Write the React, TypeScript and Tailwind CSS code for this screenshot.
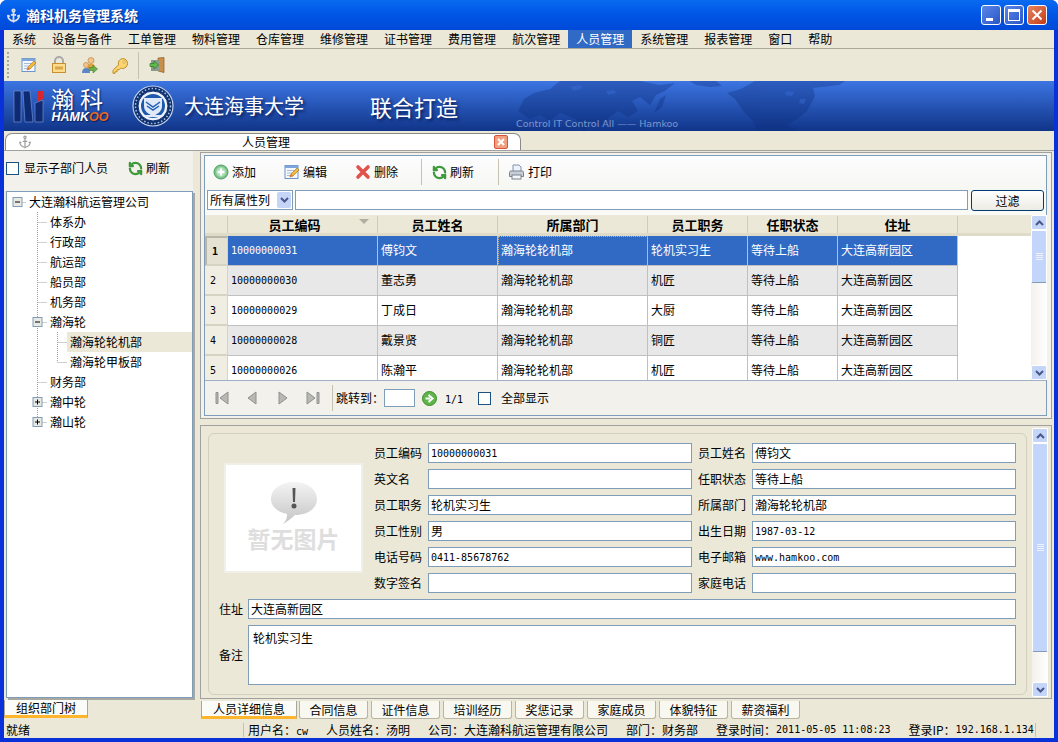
import { Anchor, RefreshCcw } from "lucide-react";

const MENUS = ["系统", "设备与备件", "工单管理", "物料管理", "仓库管理", "维修管理", "证书管理", "费用管理", "航次管理", "人员管理", "系统管理", "报表管理", "窗口", "帮助"];
const COLS = [150, 120, 150, 100, 90, 120];
const HEADS = ["员工编码", "员工姓名", "所属部门", "员工职务", "任职状态", "住址"];
const ROWS = [
  ["10000000031", "傅钧文", "瀚海轮轮机部", "轮机实习生"],
  ["10000000030", "董志勇", "瀚海轮轮机部", "机匠"],
  ["10000000029", "丁成日", "瀚海轮轮机部", "大厨"],
  ["10000000028", "戴景贤", "瀚海轮轮机部", "铜匠"],
  ["10000000026", "陈瀚平", "瀚海轮轮机部", "机匠"],
];
const TABS = ["合同信息", "证件信息", "培训经历", "奖惩记录", "家庭成员", "体貌特征", "薪资福利"];

// 数字用等宽字体，宽度接近原图的半角字
const Num = ({ children, className = "" }: { children: React.ReactNode; className?: string }) => (
  <span className={`font-['DejaVu_Sans_Mono',monospace] text-[10px] ${className}`}>{children}</span>
);

const AddIcon = () => (
  <svg width="16" height="16" viewBox="0 0 16 16">
    <circle cx="8" cy="8" r="7" fill="#7cc48a" stroke="#4f9e68" />
    <circle cx="8" cy="8" r="5" fill="#a5dcae" />
    <path d="M8 4.500v7M4.500 8h7" stroke="#fff" strokeWidth="2.400" />
  </svg>
);

const EditIcon = () => (
  <svg width="16" height="16" viewBox="0 0 16 16">
    <rect x="1" y="1.500" width="13" height="13" fill="#f4f8fe" stroke="#6e94c9" />
    <path d="M1 1.500h13v2.500H1z" fill="#7ea6dc" />
    <path d="M3 6.500h8M3 9h5M3 11.500h3" stroke="#a9bcd6" />
    <path d="M6 13l1-3 6-6 2 2-6 6z" fill="#f0b93f" stroke="#b57a1c" strokeWidth=".7" />
    <path d="M6 13l1-3 2 2z" fill="#e2753a" />
  </svg>
);

const DeleteIcon = () => (
  <svg width="16" height="16" viewBox="0 0 16 16">
    <path d="M3 3l10 10M13 3L3 13" stroke="#e0524a" strokeWidth="3.600" strokeLinecap="round" />
  </svg>
);

const PrintIcon = () => (
  <svg width="17" height="16" viewBox="0 0 17 16">
    <path d="M5 1h6l2 2v5H5z" fill="#eef3fb" stroke="#7f93b2" />
    <path d="M1.500 8.500c0-1 .5-1.500 1.500-1.500h11c1 0 1.500.5 1.500 1.500v4h-14z" fill="#c8cdd6" stroke="#7b8290" />
    <rect x="4" y="11" width="9" height="4" fill="#f5f6f8" stroke="#7b8290" />
  </svg>
);

const Refresh = () => <RefreshCcw size={15} strokeWidth={3.6} color="#3f9a3c" />;

const LockIcon = () => (
  <svg width="16" height="18" viewBox="0 0 16 18">
    <path d="M4 8V5a4 4 0 0 1 8 0v3" fill="none" stroke="#a9a9a9" strokeWidth="2" />
    <rect x="1.500" y="7.500" width="13" height="9" fill="#fbdc8c" stroke="#c98f2c" />
    <rect x="4" y="10.500" width="8" height="3" fill="#d9a545" />
  </svg>
);

const UsersIcon = () => (
  <svg width="17" height="17" viewBox="0 0 17 17">
    <circle cx="10" cy="3.500" r="3" fill="#f3c48c" stroke="#b87e3c" strokeWidth=".6" />
    <path d="M6 12c0-4 1.500-5.500 4-5.500s4 1.500 4 5z" fill="#e2a23e" />
    <circle cx="5" cy="8" r="2.500" fill="#f3c48c" stroke="#b87e3c" strokeWidth=".6" />
    <path d="M1 16c0-3.500 1.500-5 4-5s4 1.500 4 5z" fill="#5c86c8" />
    <path d="M8 10.500h4V8l4.500 4-4.500 4v-2.500H8z" fill="#6cb04a" stroke="#3d7d2b" strokeWidth=".6" />
  </svg>
);

const KeyIcon = () => (
  <svg width="17" height="17" viewBox="0 0 17 17">
    <path d="M10.500 1.500a5 5 0 0 1 0 10c-.7 0-1.300-.1-1.800-.4L7 12.800H5v2H3v1.500H1v-3l5.500-5.500A5 5 0 0 1 10.500 1.500z" fill="#fbd670" stroke="#c08a25" />
    <circle cx="12" cy="5" r="1.300" fill="#fff6d0" stroke="#c08a25" strokeWidth=".6" />
  </svg>
);

const DoorIcon = () => (
  <svg width="16" height="16" viewBox="0 0 16 16">
    <path d="M9 1l6-.5V15.500L9 14z" fill="#c9904a" stroke="#8c5d25" strokeWidth=".7" />
    <rect x="2" y="3" width="8" height="11" fill="#8b9a8e" />
    <path d="M1 6.500h4V4l4.500 4L5 12V9.500H1z" fill="#64b84c" stroke="#2f7a22" strokeWidth=".7" />
  </svg>
);

const Tri = ({ d }: { d: string }) => (
  <svg width="16" height="16" viewBox="0 0 16 16">
    <path d={d} fill="#b9b9b3" stroke="#8f9090" />
  </svg>
);

const Expander = ({ open }: { open: boolean }) => (
  <g>
    <rect x="0.500" y="0.500" width="9" height="9" fill="#e9e9e2" stroke="#7f9db9" />
    <path d={open ? "M2.500 5h5" : "M2.500 5h5M5 2.500v5"} stroke="#000" />
  </g>
);

type TreeNode = { label: string; depth: number; box?: "open" | "closed"; last?: boolean; selected?: boolean };

const TREE: TreeNode[] = [
  { label: "大连瀚科航运管理公司", depth: 0, box: "open" },
  { label: "体系办", depth: 1 },
  { label: "行政部", depth: 1 },
  { label: "航运部", depth: 1 },
  { label: "船员部", depth: 1 },
  { label: "机务部", depth: 1 },
  { label: "瀚海轮", depth: 1, box: "open" },
  { label: "瀚海轮轮机部", depth: 2, selected: true },
  { label: "瀚海轮甲板部", depth: 2, last: true },
  { label: "财务部", depth: 1 },
  { label: "瀚中轮", depth: 1, box: "closed" },
  { label: "瀚山轮", depth: 1, box: "closed", last: true },
];

const DOT = { stroke: "#a0a0a0", strokeDasharray: "1 1", fill: "none" };

const TreeRow = ({ node }: { node: TreeNode }) => {
  const w = [19, 40, 60][node.depth];
  const x = [10.5, 30.5, 50.5][node.depth];
  return (
    <div className="flex h-5 items-center">
      <svg width={w} height="20" className="shrink-0">
        {node.depth >= 1 && <path d={`M30.500 0V${node.depth === 1 && node.last ? 10 : 20}`} {...DOT} />}
        {node.depth === 2 && <path d={`M50.500 0V${node.last ? 10 : 20}`} {...DOT} />}
        <path d={`M${x} 10.500H${w}`} {...DOT} />
        {node.box && (
          <g transform={`translate(${x - 5},5)`}>
            <Expander open={node.box === "open"} />
          </g>
        )}
      </svg>
      <span className={`h-5 flex-1 pl-[3px] leading-[19px] ${node.selected ? "bg-[#ebe8d8]" : ""}`}>{node.label}</span>
    </div>
  );
};

const Scrollbar = ({ thumbH, w = "w-4" }: { thumbH: number; w?: string }) => {
  const Btn = ({ d }: { d: string }) => (
    <div className="flex h-[15px] shrink-0 items-center justify-center rounded-[2px] border border-white bg-[#c4d5f8]">
      <svg width="9" height="6" viewBox="0 0 9 6">
        <path d={d} fill="none" stroke="#47588c" strokeWidth="2" />
      </svg>
    </div>
  );
  return (
    <div className={`flex ${w} shrink-0 flex-col bg-gradient-to-r from-[#f3f1ec] to-white`}>
      <Btn d="M1 5l3.500-3.500L8 5" />
      <div className="flex-1 overflow-hidden">
        <div className="flex flex-col items-center justify-center gap-[1px] rounded-[2px] border border-[#fff] border-b-[#7f9db9] bg-[#c4d5fb]" style={{ height: thumbH }}>
          <div className="h-px w-[7px] bg-[#eef3fe]" />
          <div className="h-px w-[7px] bg-[#eef3fe]" />
          <div className="h-px w-[7px] bg-[#eef3fe]" />
          <div className="h-px w-[7px] bg-[#eef3fe]" />
        </div>
      </div>
      <Btn d="M1 1l3.500 3.500L8 1" />
    </div>
  );
};

const Field = ({ label, value, num }: { label: string; value?: string; num?: boolean }) => (
  <>
    <span className="flex items-center">{label}</span>
    <div className="flex h-5 items-center border border-[#7f9db9] bg-white pl-[2px]">
      {value && (num ? <Num>{value}</Num> : value)}
    </div>
  </>
);

const ToolItem = ({ icon, label, className }: { icon: React.ReactNode; label: string; className: string }) => (
  <div className={`flex items-center gap-[3px] ${className}`}>
    {icon}
    <span>{label}</span>
  </div>
);

const WorldMap = () => (
  <svg width="340" height="50" viewBox="0 0 340 50" className="absolute left-[506px] top-0">
    <g fill="#0c2c78" opacity=".32">
      <path d="M8 30l6-12 10-6 16-4 10-8h80l20 4 15-2-10 8-9 4-6 10-10-8-8 4 6 10-10 6-10-6-8 6-8 8-8-4-10 10-8-12-16-6-10 8-10-6-10 4z" />
      <path d="M150 18l6-4-4 12-8 6z" />
      <path d="M180 0h26l6 5-12 1-14-2z" />
      <path d="M245 0h90l-6 4-26 3 2 8-8 15-10 8-10 6 10 6h-40l-4-10-10-10-8-12-8-6 14-4z" />
    </g>
    <g fill="#3d75e2" opacity=".35">
      <path d="M60 6l10-2 3 3-9 3zM96 10l8-1 2 3-8 2zM276 10l8 1-2 4-7-1zM290 18l6 0-2 5-5-1z" />
    </g>
  </svg>
);

const Seal = () => (
  <svg width="42" height="42" viewBox="0 0 42 42">
    <circle cx="21" cy="21" r="20" fill="#0f3170" stroke="#c6d4ea" strokeWidth="1.200" />
    <circle cx="21" cy="21" r="17.500" fill="none" stroke="#a9c0e2" strokeWidth="1.500" strokeDasharray="1.500 2" />
    <circle cx="21" cy="21" r="15" fill="#eef3fb" stroke="#0f3170" />
    <circle cx="21" cy="21" r="12" fill="#1f59ad" />
    <path d="M12 13h18v8c0 5-4 8-9 10-5-2-9-5-9-10z" fill="#dfe9f7" />
    <path d="M14 17l7 5 7-5M15 21l6 4 6-4" fill="none" stroke="#2160b8" strokeWidth="1.500" />
    <path d="M13 31h16" stroke="#dfe9f7" strokeWidth="2" />
  </svg>
);

export default function App() {
  return (
    <div className="flex h-[742px] w-[1058px] flex-col overflow-hidden rounded-t-[7px] bg-[#0831d9] font-['Noto_Sans_CJK_SC','Liberation_Sans',sans-serif] text-[12px] text-black">
      {/* 标题栏 */}
      <div className="flex h-[30px] shrink-0 items-center bg-gradient-to-b from-[#0a6af0] via-[#0055e5] to-[#0049d8] pl-[6px] pr-[11px]">
        <Anchor size={15} strokeWidth={2.800} color="#d7dfe8" />
        <span className="ml-[5px] text-[14px] font-bold text-white [text-shadow:1px_1px_1px_#0a2a80]">瀚科机务管理系统</span>
        <div className="ml-auto flex gap-[3px]">
          <div className="flex h-[20px] w-[20px] items-end rounded-[3px] border border-white bg-gradient-to-br from-[#5b86ea] to-[#2a56c6] pb-[3px] pl-[4px]">
            <div className="h-[3px] w-[7px] bg-white" />
          </div>
          <div className="h-[20px] w-[20px] rounded-[3px] border border-white bg-gradient-to-br from-[#5b86ea] to-[#2a56c6] p-[3px]">
            <div className="h-full w-full border border-t-[3px] border-white" />
          </div>
          <div className="flex h-[20px] w-[20px] items-center justify-center rounded-[3px] border border-white bg-gradient-to-br from-[#e8835f] to-[#c33a12]">
            <svg width="12" height="12" viewBox="0 0 12 12">
              <path d="M1.500 1.500l9 9M10.500 1.500l-9 9" stroke="#fff" strokeWidth="2" />
            </svg>
          </div>
        </div>
      </div>

      <div className="flex min-h-0 flex-1 flex-col border-x-4 border-x-[#0831d9] bg-[#ebe8d8]">
        {/* 菜单 */}
        <div className="flex h-[19px] shrink-0 border-b border-[#aca899]">
          {MENUS.map((m) => (
            <div key={m} className={`flex h-[18px] items-center px-2 pb-px ${m === "人员管理" ? "bg-[#316ac5] text-white" : ""}`}>
              {m}
            </div>
          ))}
        </div>

        {/* 工具栏 */}
        <div className="flex h-[32px] shrink-0 items-center pl-[3px]">
          <div className="mr-[12px] h-[26px] w-[2px] border-l-2 border-dotted border-[#a8a89a]" />
          <div className="flex items-center gap-[14px]">
            <EditIcon />
            <LockIcon />
            <UsersIcon />
            <KeyIcon />
          </div>
          <div className="ml-[9px] mr-[10px] h-[27px] w-px bg-[#c5c2b0]" />
          <DoorIcon />
        </div>

        {/* 横幅 */}
        <div className="relative flex h-[50px] shrink-0 items-center bg-gradient-to-b from-[#3d75e2] to-[#103589] pl-[9px]">
          <WorldMap />
          <svg width="31" height="33" viewBox="0 0 31 33" className="relative shrink-0">
            <path d="M1 1h7v31H1z" fill="#0e2a72" stroke="#7f9fe0" strokeWidth=".6" />
            <path d="M10 1h7l3 31h-8z" fill="#0e2a72" stroke="#7f9fe0" strokeWidth=".6" />
            <path d="M22 13l8-3v22h-8z" fill="#0e2a72" stroke="#7f9fe0" strokeWidth=".6" />
            <path d="M24 1h6v8l-6 3z" fill="#d8262c" />
          </svg>
          <div className="relative ml-[6px] flex w-[60px] shrink-0 flex-col items-center text-white">
            <span className="-mt-[2px] text-[23px] leading-[25px] tracking-[6px] [text-shadow:1px_1px_2px_#0a1f5c]">瀚科</span>
            <span className="font-['Liberation_Sans',sans-serif] text-[12.500px] font-bold italic leading-[13px] [text-shadow:1px_1px_1px_#0a1f5c]">
              HAMK<span className="text-[#e8691f]">OO</span>
            </span>
          </div>
          <div className="relative ml-[22px] flex">
            <Seal />
          </div>
          <span className="relative ml-[10px] text-[20px] text-white [text-shadow:2px_2px_3px_#0a1f5c]">大连海事大学</span>
          <span className="relative ml-[66px] text-[22px] text-white [text-shadow:2px_2px_3px_#0a1f5c]">联合打造</span>
          <span className="absolute left-[512px] top-[36px] font-['DejaVu_Sans',sans-serif] text-[9.500px] text-[#7f97cc]">Control IT Control All —— Hamkoo</span>
        </div>

        {/* 文档标签 */}
        <div className="flex h-[19px] shrink-0 items-end pl-[1px]">
          <div className="flex h-[17px] w-[516px] items-center rounded-t-[7px] border border-b-0 border-[#8a8a84] bg-white pl-[12px] pr-[12px]">
            <Anchor size={14} strokeWidth={2} color="#9a9a9a" />
            <span className="flex-1 pl-[6px] text-center">人员管理</span>
            <div className="flex h-[14px] w-[14px] items-center justify-center rounded-[2px] border border-[#d8533a] bg-[#f0a080]">
              <svg width="8" height="8" viewBox="0 0 8 8">
                <path d="M1 1l6 6M7 1L1 7" stroke="#fff" strokeWidth="2" />
              </svg>
            </div>
          </div>
        </div>

        {/* 主体 */}
        <div className="flex min-h-0 flex-1 gap-[7px] border-t border-[#a0a0a0]">
          {/* 左侧 */}
          <div className="flex w-[189px] shrink-0 flex-col">
            <div className="flex h-[40px] shrink-0 items-center bg-[#f3f1ec] pb-[6px] pl-[2px]">
              <div className="h-[13px] w-[13px] border border-[#1c5180] bg-white" />
              <span className="ml-[5px]">显示子部门人员</span>
              <span className="ml-[20px]">
                <Refresh />
              </span>
              <span className="ml-[3px]">刷新</span>
            </div>
            <div className="ml-[2px] h-[507px] shrink-0 border border-[#7f9db9] bg-white shadow-[2px_2px_0_#a8a8a0]">
              {TREE.map((n) => (
                <TreeRow key={n.label} node={n} />
              ))}
            </div>
            <div className="mt-[2px] flex h-[18px] w-[84px] items-center justify-center border-x border-[#a8a89a] border-b-[3px] border-b-[#ffb52c] bg-[#fbfbf7]">
              组织部门树
            </div>
          </div>

          {/* 右侧 */}
          <div className="flex w-[854px] shrink-0 flex-col pt-[1px]">
            <div className="h-[267px] w-[852px] shrink-0 border border-[#a0a0a0] bg-[#f3f1ec] pb-[2px] pl-[3px] pr-[4px] pt-[2px]">
              <div className="flex h-full flex-col border border-[#7f9db9] bg-[#f3f1ec]">
                <div className="flex h-[34px] shrink-0 items-center bg-gradient-to-b from-[#fdfdff] to-[#f6f6f2] pb-[2px] pl-[8px]">
                  <ToolItem icon={<AddIcon />} label="添加" className="w-[71px]" />
                  <ToolItem icon={<EditIcon />} label="编辑" className="w-[71px]" />
                  <ToolItem icon={<DeleteIcon />} label="删除" className="w-[66px]" />
                  <div className="mr-[10px] h-[26px] w-px bg-[#c5c2b0]" />
                  <ToolItem icon={<Refresh />} label="刷新" className="w-[66px]" />
                  <div className="mr-[9px] h-[26px] w-px bg-[#c5c2b0]" />
                  <ToolItem icon={<PrintIcon />} label="打印" className="" />
                </div>
                <div className="flex h-[25px] shrink-0 items-start bg-[#f9f9f5] pl-[2px]">
                  <div className="flex h-5 w-[86px] items-center justify-between border border-[#7f9db9] bg-white pl-[2px] pr-[1px]">
                    <span>所有属性列</span>
                    <div className="flex h-4 w-[14px] items-center justify-center rounded-[2px] bg-[#c4d5f8]">
                      <svg width="9" height="6" viewBox="0 0 9 6">
                        <path d="M1 1l3.500 3.500L8 1" fill="none" stroke="#47588c" strokeWidth="2" />
                      </svg>
                    </div>
                  </div>
                  <div className="ml-[2px] h-5 w-[673px] border border-[#7f9db9] bg-white" />
                  <div className="ml-[3px] flex h-[21px] w-[73px] items-center justify-center rounded-[3px] border border-[#003c74] bg-gradient-to-b from-white to-[#ecebe4]">
                    过滤
                  </div>
                </div>
                {/* 表格 */}
                <div className="flex h-[166px] shrink-0 border-b border-[#a0b0c4]">
                  <div className="w-[826px] shrink-0 overflow-hidden bg-white">
                    <div className="flex h-[21px] border-b-[3px] border-[#dedbc8] bg-[#ebe8d8] pt-px text-[13px] font-bold">
                      <div className="w-[23px] shrink-0 border-r border-[#cfccb8]" />
                      {HEADS.map((h, i) => (
                        <div key={h} style={{ width: COLS[i] }} className={`relative flex shrink-0 items-center justify-center border-r border-[#cfccb8] ${i === 0 ? "pr-[16px]" : ""}`}>
                          {h}
                          {i === 0 && (
                            <svg width="10" height="6" viewBox="0 0 10 6" className="absolute right-[8px] top-[3px]">
                              <path d="M0 0h10L5 5z" fill="#b0aea0" />
                            </svg>
                          )}
                        </div>
                      ))}
                    </div>
                    {ROWS.map((r, i) => {
                      const sel = i === 0;
                      const bg = sel ? "bg-[#316ac5] text-white" : i % 2 ? "bg-[#e8e8e8]" : "bg-white";
                      return (
                        <div key={r[0]} className="flex h-[30px]">
                          <div className={`flex w-[23px] shrink-0 items-center border-b-2 border-r border-[#d6d3c2] pl-[5px] ${sel ? "border-l-2 border-t-2 border-l-[#b8b6a8] border-t-[#b8b6a8] bg-[#e4e1d2] pl-[3px] font-bold" : "bg-[#f0eee2]"}`}>
                            <Num>{i + 1}</Num>
                          </div>
                          {[...r, "等待上船", "大连高新园区"].map((c, j) => (
                            <div
                              key={j}
                              style={{ width: COLS[j] }}
                              className={`flex shrink-0 items-center border-b border-r border-[#c0c0c0] pl-[3px] ${j === 0 ? "" : "pb-[2px]"} ${bg} ${sel && j === 2 ? "outline-1 -outline-offset-1 outline-dotted outline-[#c8b080]" : ""}`}
                            >
                              {j === 0 ? <Num>{c}</Num> : c}
                            </div>
                          ))}
                        </div>
                      );
                    })}
                  </div>
                  <Scrollbar thumbH={53} />
                </div>
                {/* 分页 */}
                <div className="flex min-h-0 flex-1 items-center pl-[9px]">
                  <div className="flex w-[118px] items-center justify-between pr-[11px]">
                    <Tri d="M2 2.500h2v11H2zM14 2l-8 6 8 6z" />
                    <Tri d="M12 2l-8 6 8 6z" />
                    <Tri d="M4 2l8 6-8 6z" />
                    <Tri d="M2 2l8 6-8 6zM12 2.500h2v11h-2z" />
                  </div>
                  <div className="h-[26px] w-px bg-[#c5c2b0]" />
                  <span className="ml-[3px]">跳转到：</span>
                  <div className="h-[18px] w-[31px] border border-[#7f9db9] bg-white" />
                  <svg width="15" height="15" viewBox="0 0 15 15" className="ml-[7px]">
                    <circle cx="7.500" cy="7.500" r="7" fill="#5fb548" stroke="#3c8a2c" />
                    <path d="M3.500 7.500h4.500M6.500 4l4 3.500-4 3.500" fill="none" stroke="#fff" strokeWidth="2" />
                  </svg>
                  <span className="ml-[8px]">
                    <Num>1/1</Num>
                  </span>
                  <div className="ml-[15px] h-[13px] w-[13px] border border-[#1c5180] bg-white" />
                  <span className="ml-[10px]">全部显示</span>
                </div>
              </div>
            </div>

            <div className="h-[6px] shrink-0" />

            {/* 详细信息 */}
            <div className="flex h-[274px] w-[852px] shrink-0 border border-[#a0a0a0] pb-[1px] pl-[7px] pr-[2px] pt-[2px]">
              <div className="mb-[2px] mt-[5px] w-[819px] shrink-0 rounded-[6px] border border-[#d2d0bc] pl-[15px] pt-[9px]">
                <div className="flex">
                  <div className="mr-[11px] mt-[20px] flex h-[110px] w-[139px] shrink-0 flex-col items-center border-2 border-[#f0efe8] bg-white pt-[16px]">
                    <svg width="48" height="44" viewBox="0 0 48 44">
                      <defs>
                        <linearGradient id="bubble" x1="0" y1="0" x2="0" y2="1">
                          <stop offset="0" stopColor="#f4f4f4" />
                          <stop offset="1" stopColor="#c4c4c4" />
                        </linearGradient>
                      </defs>
                      <path d="M24 1c13 0 23 7 23 17s-10 16-22 16c-3 3-7 6-12 9 3-3 4-6 4-10C8 31 1 26 1 18 1 8 11 1 24 1z" fill="url(#bubble)" />
                      <path d="M22.500 7h3l-.5 14h-2z" fill="#555" />
                      <circle cx="24" cy="25" r="2.500" fill="#555" />
                    </svg>
                    <span className="-mt-[2px] text-[23px] font-bold leading-[30px] text-[#dedede]">暂无图片</span>
                  </div>
                  <div className="grid grid-cols-[54px_264px_6px_54px_264px] auto-rows-[20px] gap-y-[6px]">
                    {[
                      ["员工编码", "10000000031", "员工姓名", "傅钧文"],
                      ["英文名", "", "任职状态", "等待上船"],
                      ["员工职务", "轮机实习生", "所属部门", "瀚海轮轮机部"],
                      ["员工性别", "男", "出生日期", "1987-03-12"],
                      ["电话号码", "0411-85678762", "电子邮箱", "www.hamkoo.com"],
                      ["数字签名", "", "家庭电话", ""],
                    ].map((r) => (
                      <div key={r[0]} className="contents">
                        <Field label={r[0]} value={r[1]} num={/^[0-9]/.test(r[1])} />
                        <div />
                        <Field label={r[2]} value={r[3]} num={/^[0-9w]/.test(r[3])} />
                      </div>
                    ))}
                  </div>
                </div>
                <div className="mt-[6px] flex h-5 items-center">
                  <span className="ml-[-5px] w-[29px]">住址</span>
                  <div className="flex h-5 w-[768px] items-center border border-[#7f9db9] bg-white pl-[2px]">大连高新园区</div>
                </div>
                <div className="mt-[6px] flex h-[60px] items-center">
                  <span className="ml-[-5px] w-[29px]">备注</span>
                  <div className="h-[60px] w-[768px] border border-[#7f9db9] bg-white pl-[4px] pt-[3px]">轮机实习生</div>
                </div>
              </div>
              <div className="ml-[5px] flex">
                <Scrollbar thumbH={209} w="w-[16px]" />
              </div>
            </div>

            {/* 底部标签 */}
            <div className="mt-[2px] flex h-[18px] shrink-0">
              <div className="ml-[1px] flex h-[18px] w-[96px] items-center justify-center border-x border-[#a8a89a] border-b-[3px] border-b-[#ffb52c] bg-[#fbfbf7]">
                人员详细信息
              </div>
              <div className="ml-[2px] flex gap-[3px]">
                {TABS.map((t) => (
                  <div key={t} className="flex h-[18px] w-[69px] items-center justify-center rounded-b-[3px] border-x border-b border-[#b8b5a2] bg-[#f8f7f0]">
                    {t}
                  </div>
                ))}
              </div>
            </div>
          </div>
        </div>

        {/* 状态栏 */}
        <div className="flex h-[16px] shrink-0 items-center pb-px pl-[2px]">
          <span className="w-[237px]">就绪</span>
          <div className="h-[14px] w-px bg-[#c5c2b0]" />
          <span className="ml-[4px]">用户名：</span>
          <span className="w-[30px]">
            <Num>cw</Num>
          </span>
          <span>人员姓名：汤明</span>
          <span className="ml-[18px]">公司：大连瀚科航运管理有限公司</span>
          <span className="ml-[18px]">部门：财务部</span>
          <span className="ml-[18px]">登录时间：</span>
          <Num>2011-05-05 11:08:23</Num>
          <span className="ml-[18px]">登录IP：</span>
          <Num>192.168.1.134</Num>
          <div className="ml-[1px] h-[14px] w-px bg-[#c5c2b0]" />
        </div>
      </div>
      <div className="h-[4px] shrink-0 bg-[#0831d9]" />
    </div>
  );
}
